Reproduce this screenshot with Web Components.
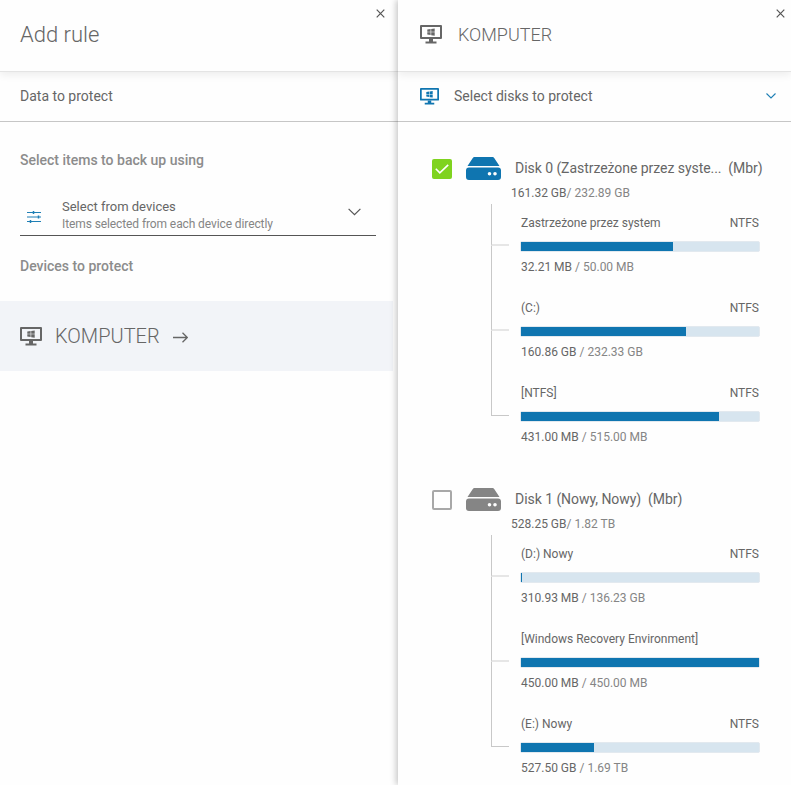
<!DOCTYPE html>
<html><head><meta charset="utf-8"><style>
html,body{margin:0;height:100%;overflow:hidden;background:#fff;font-family:Roboto,sans-serif;color:#666}
body{display:flex;width:791px;height:785px}
</style></head><body>
<rule-panel></rule-panel>
<disk-panel></disk-panel>
<script>
const ICONS={
monitor:(c,w=22,h=19)=>`<svg width="${w}" height="${h}" viewBox="0 0 22 19" preserveAspectRatio="none" style="display:block"><path fill="${c}" fill-rule="evenodd" d="M1 0h20a1 1 0 0 1 1 1v12a1 1 0 0 1-1 1H1a1 1 0 0 1-1-1V1a1 1 0 0 1 1-1zM2 2v10h18V2z"/><path fill="${c}" d="M9 14h4v2.400H9zM5.500 16.400h11V18.500h-11z"/><path fill="${c}" d="M7.300 4.500l3.300-.5v2.800H7.300zM11.200 3.900l3.500-.5v3.400H11.200zM7.300 7.300h3.300v2.800l-3.300-.5zM11.200 7.300h3.500v3.400l-3.500-.5z"/></svg>`,
disk:c=>`<svg width="35" height="23" viewBox="0 0 35 23" style="display:block"><path fill="${c}" d="M8.500 0h18a2 2 0 0 1 1.700 1L33.500 9H1.500L6.800 1A2 2 0 0 1 8.500 0z"/><path fill="${c}" fill-rule="evenodd" d="M3 10.500h29a3 3 0 0 1 3 3V20a3 3 0 0 1-3 3H3a3 3 0 0 1-3-3v-6.500a3 3 0 0 1 3-3zM23.500 15a1.800 1.800 0 1 0 0 3.600 1.800 1.800 0 0 0 0-3.600zM29 15a1.800 1.800 0 1 0 0 3.600A1.800 1.800 0 0 0 29 15z"/></svg>`,
close:`<svg width="9" height="9" viewBox="0 0 9 9" style="display:block"><path d="M.7.7l7.600 7.600M8.300.7L.7 8.300" stroke="#555" stroke-width="1.200" fill="none"/></svg>`
};
class XClose extends HTMLElement{constructor(){super();this.attachShadow({mode:'open'}).innerHTML=`<style>:host{display:block;position:absolute;top:9px;right:var(--close-right,13px)}</style>${ICONS.close}`}}
customElements.define('x-close',XClose);

class PanelHeader extends HTMLElement{constructor(){super();this.attachShadow({mode:'open'}).innerHTML=`<style>
:host{display:flex;align-items:center;box-sizing:border-box;height:72px;padding:0 0 2px 22px;border-bottom:1px solid #e4e4e4;box-shadow:0 3px 8px rgba(0,0,0,.07);position:relative;font-weight:300}
</style><slot></slot>`}}
customElements.define('panel-header',PanelHeader);

class SubBar extends HTMLElement{constructor(){super();this.attachShadow({mode:'open'}).innerHTML=`<style>
:host{display:flex;align-items:center;box-sizing:border-box;height:50px;border-bottom:1px solid #c6c6c6;padding:0 0 1px 22px;font-size:14px;color:#666}
</style><slot></slot>`}}
customElements.define('sub-bar',SubBar);

class RulePanel extends HTMLElement{constructor(){super();this.attachShadow({mode:'open'}).innerHTML=`<style>
:host{display:block;flex:0 0 398px;box-sizing:border-box;background:#fefefe;position:relative;--close-right:13px}
panel-header{padding-left:20px;font-size:22px;color:#666}
sub-bar{padding-left:20px}
h3{margin:0;font-size:14px;font-weight:500;color:#8c8c8c;line-height:20px}
.sec{padding:28px 20px 0}
.sel{display:flex;align-items:center;margin:25px 2px 0 0;height:41px;box-sizing:border-box;border-bottom:1px solid #555;padding-left:7px}
.sel .ico{flex:0 0 35px;margin-top:4px}
.txt{flex:1;align-self:flex-start;font-size:13px;line-height:16px;color:#666;padding-top:4px}
.txt small{display:block;margin-top:1px;font-size:12px;line-height:17px;color:#858585;letter-spacing:-.1px}
.chev{margin:0 15px 6px 0}
.dev{margin:20px 0 0}
.row{display:flex;align-items:center;height:70px;margin:25px 5px 0 0;padding-left:20px;background:#f2f4f8;font-size:20px;font-weight:300;color:#666}
.row .m{margin-right:13px}
.row .a{margin:2px 0 0 13px}
</style>
<panel-header>Add rule<x-close></x-close></panel-header>
<sub-bar>Data to protect</sub-bar>
<div class="sec">
<h3>Select items to back up using</h3>
<div class="sel">
<div class="ico"><svg width="14" height="12" viewBox="0 0 14 12" style="display:block"><path d="M0 1.500h14M0 6h14M0 10.500h14" stroke="#1f7fb5" stroke-width="1.200"/><path d="M6.500 0v3M11.500 4.500v3M3.500 9v3" stroke="#1f7fb5" stroke-width="1.500"/></svg></div>
<div class="txt">Select from devices<small>Items selected from each device directly</small></div>
<svg class="chev" width="13" height="8" viewBox="0 0 13 8"><path d="M.6.8l5.900 5.900L12.400.8" stroke="#555" stroke-width="1.200" fill="none"/></svg>
</div>
<h3 class="dev">Devices to protect</h3>
</div>
<div class="row"><span class="m">${ICONS.monitor('#666')}</span>KOMPUTER<svg class="a" width="15" height="11" viewBox="0 0 15 11"><path d="M0 5.500h14M9.500 .8l4.800 4.700-4.800 4.700" stroke="#666" stroke-width="1.300" fill="none"/></svg></div>`}}
customElements.define('rule-panel',RulePanel);

class PartBar extends HTMLElement{
connectedCallback(){const g=a=>this.getAttribute(a)||'';const last=this.hasAttribute('last');
this.attachShadow({mode:'open'}).innerHTML=`<style>
:host{display:flex;height:85px}
.c{flex:0 0 30px;display:flex;flex-direction:column}
.c i{display:block;box-sizing:border-box;width:18px;border-left:1px solid #c8c8c8}
.c .t{height:42px;border-bottom:${last?'1px solid #c8c8c8':'2px solid #e6e6e6'}}
.c .b{flex:1;${last?'border:0':''}}
.m{flex:0 0 239px;padding-top:10px}
.h{display:flex;justify-content:space-between;font-size:12px;line-height:18px;color:#666;height:18px;padding-right:1px}
.bar{margin:9px 0 0 -1px;height:11px;box-sizing:border-box;border:1px solid #e2e9ef;border-radius:2px;background:#d7e5ef}
.bar b{display:block;height:100%;background:#0f75b0;width:${g('pct')}%}
.i{margin-top:6px;font-size:12px;line-height:18px;color:#666}
.i span{color:#858585}
</style><div class="c"><i class="t"></i><i class="b"></i></div>
<div class="m"><div class="h"><span>${g('name')}</span><span>${g('fs')}</span></div>
<div class="bar"><b></b></div>
<div class="i">${g('used')} <span>/ ${g('total')}</span></div></div>`}}
customElements.define('part-bar',PartBar);

class DiskGroup extends HTMLElement{connectedCallback(){const g=a=>this.getAttribute(a)||'';const on=this.hasAttribute('checked');
this.attachShadow({mode:'open'}).innerHTML=`<style>
:host{display:block;height:331px;box-sizing:border-box}
.top{display:flex;align-items:center;height:24px;padding-left:34px}
.cb{flex:0 0 20px;height:20px;box-sizing:border-box;border-radius:2px;margin-right:14px;${on?'background:#7fd31f':'border:2px solid #a8a8a8'}}
.cb svg{display:block;margin:5px 0 0 3px}
.d{margin:-2px 14px 0 0}
.n{font-size:14px;color:#666;white-space:pre;letter-spacing:-.05px;margin-top:-2px}
.sz{font-size:12px;line-height:16px;color:#858585;padding:4px 0 0 113px;height:16px}
.sz em{font-style:normal;color:#666}
.tree{margin:3px 0 0 93px}
</style><div class="top"><div class="cb">${on?'<svg width="14" height="10" viewBox="0 0 14 10"><path d="M.8 4.800l4 4L13.200 .8" stroke="#fff" stroke-width="1.600" fill="none"/></svg>':''}</div>
<div class="d">${ICONS.disk(on?'#0f75b0':'#858585')}</div>
<div class="n">${g('name')}</div></div>
<div class="sz"><em>${g('used')}</em>/ ${g('total')}</div>
<div class="tree"><slot></slot></div>`}}
customElements.define('disk-group',DiskGroup);

class DiskPanel extends HTMLElement{constructor(){super();this.attachShadow({mode:'open'}).innerHTML=`<style>
:host{display:block;flex:0 0 393px;background:#fefefe;position:relative;box-shadow:-2px 0 6px rgba(0,0,0,.22);overflow:hidden;--close-right:6px}
panel-header{font-size:18px;color:#666}
.m1{margin-right:16px}
.m2{margin-right:15px}
sub-bar .grow{flex:1}
sub-bar svg.ch{margin-right:15px}
.list{padding-top:35px}
</style>
<panel-header><span class="m1">${ICONS.monitor('#666')}</span>KOMPUTER<x-close></x-close></panel-header>
<sub-bar><span class="m2">${ICONS.monitor('#0f75b0',19,17)}</span><span class="grow">Select disks to protect</span><svg class="ch" width="10" height="6" viewBox="0 0 10 6"><path d="M.5.5L5 5 9.500.5" stroke="#1f7fb5" stroke-width="1.100" fill="none"/></svg></sub-bar>
<div class="list"><slot></slot></div>`}}
customElements.define('disk-panel',DiskPanel);

document.querySelector('disk-panel').innerHTML=`
<disk-group checked name="Disk 0 (Zastrzeżone przez syste...  (Mbr)" used="161.32 GB" total="232.89 GB">
<part-bar name="Zastrzeżone przez system" fs="NTFS" used="32.21 MB" total="50.00 MB" pct="64"></part-bar>
<part-bar name="(C:)" fs="NTFS" used="160.86 GB" total="232.33 GB" pct="69.300"></part-bar>
<part-bar last name="[NTFS]" fs="NTFS" used="431.00 MB" total="515.00 MB" pct="83.400"></part-bar>
</disk-group>
<disk-group name="Disk 1 (Nowy, Nowy)  (Mbr)" used="528.25 GB" total="1.82 TB">
<part-bar name="(D:) Nowy" fs="NTFS" used="310.93 MB" total="136.23 GB" pct="0.500"></part-bar>
<part-bar name="[Windows Recovery Environment]" fs="" used="450.00 MB" total="450.00 MB" pct="100"></part-bar>
<part-bar last name="(E:) Nowy" fs="NTFS" used="527.50 GB" total="1.69 TB" pct="30.500"></part-bar>
</disk-group>`;
</script>
</body></html>
